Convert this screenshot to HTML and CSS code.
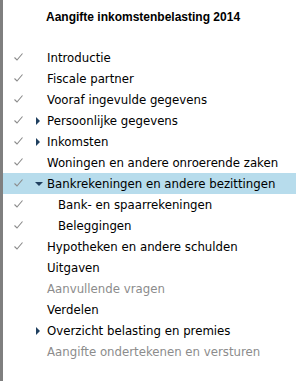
FILE: index.html
```html
<!DOCTYPE html>
<html>
<head>
<meta charset="utf-8">
<link rel="stylesheet" href="styles.css">
</head>
<body>
<div class="panel">
  <div class="title">Aangifte inkomstenbelasting 2014</div>
  <ul class="menu">
    <li class="item"><span class="check"><svg viewBox="0 0 9 8"><path d="M0.5 4.5 L3 7 L8.5 0.5"/></svg></span><span class="arrow"></span><span class="label">Introductie</span></li>
    <li class="item"><span class="check"><svg viewBox="0 0 9 8"><path d="M0.5 4.5 L3 7 L8.5 0.5"/></svg></span><span class="arrow"></span><span class="label">Fiscale partner</span></li>
    <li class="item"><span class="check"><svg viewBox="0 0 9 8"><path d="M0.5 4.5 L3 7 L8.5 0.5"/></svg></span><span class="arrow"></span><span class="label">Vooraf ingevulde gegevens</span></li>
    <li class="item"><span class="check"><svg viewBox="0 0 9 8"><path d="M0.5 4.5 L3 7 L8.5 0.5"/></svg></span><span class="arrow right"></span><span class="label">Persoonlijke gegevens</span></li>
    <li class="item"><span class="check"><svg viewBox="0 0 9 8"><path d="M0.5 4.5 L3 7 L8.5 0.5"/></svg></span><span class="arrow right"></span><span class="label">Inkomsten</span></li>
    <li class="item"><span class="check"><svg viewBox="0 0 9 8"><path d="M0.5 4.5 L3 7 L8.5 0.5"/></svg></span><span class="arrow"></span><span class="label">Woningen en andere onroerende zaken</span></li>
    <li class="item active"><span class="check"><svg viewBox="0 0 9 8"><path d="M0.5 4.5 L3 7 L8.5 0.5"/></svg></span><span class="arrow down"></span><span class="label">Bankrekeningen en andere bezittingen</span></li>
    <li class="item sub"><span class="check"><svg viewBox="0 0 9 8"><path d="M0.5 4.5 L3 7 L8.5 0.5"/></svg></span><span class="arrow"></span><span class="label">Bank- en spaarrekeningen</span></li>
    <li class="item sub"><span class="check"><svg viewBox="0 0 9 8"><path d="M0.5 4.5 L3 7 L8.5 0.5"/></svg></span><span class="arrow"></span><span class="label">Beleggingen</span></li>
    <li class="item"><span class="check"><svg viewBox="0 0 9 8"><path d="M0.5 4.5 L3 7 L8.5 0.5"/></svg></span><span class="arrow"></span><span class="label">Hypotheken en andere schulden</span></li>
    <li class="item"><span class="check"></span><span class="arrow"></span><span class="label">Uitgaven</span></li>
    <li class="item disabled"><span class="check"></span><span class="arrow"></span><span class="label">Aanvullende vragen</span></li>
    <li class="item"><span class="check"></span><span class="arrow"></span><span class="label">Verdelen</span></li>
    <li class="item"><span class="check"></span><span class="arrow right"></span><span class="label">Overzicht belasting en premies</span></li>
    <li class="item disabled"><span class="check"></span><span class="arrow"></span><span class="label">Aangifte ondertekenen en versturen</span></li>
  </ul>
</div>
</body>
</html>
```
FILE: styles.css
```css
html, body {
  margin: 0;
  padding: 0;
  background: #ffffff;
}
.panel {
  width: 306px;
  height: 381px;
  box-sizing: border-box;
  border-left: 3px solid #7f7f7f;
  padding-top: 10px;
  font-family: "DejaVu Sans", Verdana, sans-serif;
}
.title {
  font-family: "Liberation Sans", Arial, sans-serif;
  font-weight: bold;
  font-size: 12px;
  color: #000;
  padding-left: 43px;
  height: 14px;
  line-height: 14px;
}
.menu {
  list-style: none;
  margin: 23px 0 0 0;
  padding: 0;
}
.item {
  display: flex;
  align-items: center;
  height: 21px;
  width: 293px;
  font-size: 11.75px;
  color: #000;
}
.item.active {
  background: #b7dcec;
}
.item.disabled {
  color: #8c8c8c;
}
.check {
  width: 11px;
  height: 9px;
  margin-left: 11px;
  display: flex;
}
.check svg {
  width: 9px;
  height: 8px;
  fill: none;
  stroke: #8a8a8a;
  stroke-width: 1.1;
}
.arrow {
  width: 7px;
  height: 8px;
  margin-left: 10px;
  margin-right: 5px;
  position: relative;
}
.arrow.right::before {
  content: "";
  position: absolute;
  left: 1px;
  top: 0;
  border-left: 4px solid #1f3f5f;
  border-top: 4px solid transparent;
  border-bottom: 4px solid transparent;
}
.arrow.down::before {
  content: "";
  position: absolute;
  left: 0;
  top: 2px;
  border-top: 4px solid #1f3f5f;
  border-left: 4px solid transparent;
  border-right: 4px solid transparent;
}
.item.sub .label {
  padding-left: 11px;
}
```
